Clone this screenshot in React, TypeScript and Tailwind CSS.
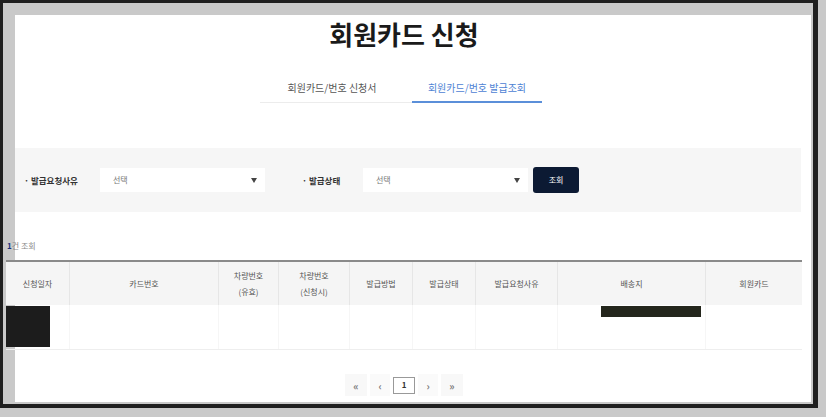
const columns = [
  { label: ['신청일자'], w: 'w-[63px]' },
  { label: ['카드번호'], w: 'w-[149px]' },
  { label: ['차량번호', '(유효)'], w: 'w-[60px]' },
  { label: ['차량번호', '(신청시)'], w: 'w-[71px]' },
  { label: ['발급방법'], w: 'w-[63px]' },
  { label: ['발급상태'], w: 'w-[63px]' },
  { label: ['발급요청사유'], w: 'w-[82px]' },
  { label: ['배송지'], w: 'w-[148px]' },
  { label: ['회원카드'], w: 'w-[97px]' },
];

function Select() {
  return (
    <div className="w-[165px] h-[24px] bg-white flex items-center justify-between pl-[13px] pr-[8px] text-[8px] text-[#777]">
      <span>선택</span>
      <svg width="6" height="5" viewBox="0 0 6 5">
        <path d="M0 0H6L3 5Z" fill="#444" />
      </svg>
    </div>
  );
}

export default function App() {
  return (
    <div className="w-[826px] h-[417px] bg-[#c9c9c9] overflow-hidden font-['Noto_Sans_CJK_KR','Noto_Sans',sans-serif]">
      <div className="w-[818px] h-[408px] border-l-[3px] border-t-[3px] border-r-[5px] border-b-[4px] border-[#1f1f1f] pl-[12px] pt-[12px] pr-[2px] pb-[2px]">
        <div className="w-full h-full bg-white">
          <div className="-ml-[9px] w-[796px] flex flex-col">
            {/* title */}
            <h1 className="text-center text-[26px] leading-[30px] font-bold text-[#1a1a1a] pt-[4px]">회원카드 신청</h1>

            {/* tabs */}
            <div className="flex justify-center mt-[24px] pr-[6px]">
              <div className="w-[152px] h-[30px] flex items-center justify-center pr-[8px] text-[10px] text-[#555] border-b border-[#ececec]">
                회원카드/번호 신청서
              </div>
              <div className="w-[130px] h-[30px] flex items-center justify-center text-[10px] text-[#4d82d4] border-b-2 border-[#5b8fd9]">
                회원카드/번호 발급조회
              </div>
            </div>

            {/* filters */}
            <div className="ml-[9px] mr-[1px] mt-[45px] h-[64px] bg-[#f6f6f6] flex items-center pl-[9px]">
              <span className="w-[76px] text-[8.5px] font-bold text-[#333]">· 발급요청사유</span>
              <Select />
              <span className="ml-[37px] w-[61px] text-[8.5px] font-bold text-[#333]">· 발급상태</span>
              <Select />
              <button className="ml-[5px] w-[46px] h-[26px] rounded-[3px] bg-[#0c1a33] text-white text-[8px]">조회</button>
            </div>

            {/* count */}
            <div className="mt-[28px] ml-[1px] text-[8px] leading-[12px] text-[#888]">
              <span className="font-bold text-[#1b2f7a]">1</span>건 조회
            </div>

            {/* table */}
            <div className="mt-[8px] border-t-2 border-[#8a8a8a]">
              <div className="flex h-[43px] bg-[#f5f5f5]">
                {columns.map((c, i) => (
                  <div
                    key={i}
                    className={`${c.w} flex flex-col items-center justify-center text-[8px] leading-[16px] text-[#555] ${i > 0 ? 'border-l border-[#e6e6e6]' : ''}`}
                  >
                    {c.label.map((l) => (
                      <span key={l}>{l}</span>
                    ))}
                  </div>
                ))}
              </div>
              <div className="flex h-[45px] border-b border-[#eeeeee]">
                {columns.map((c, i) => (
                  <div key={i} className={`${c.w} relative ${i > 0 ? 'border-l border-[#f6f6f6]' : ''}`}>
                    {i === 0 && <div className="absolute left-0 top-[1px] w-[44px] h-[41px] bg-[#1c1c1c]" />}
                    {i === 7 && <div className="absolute left-[43px] top-[1px] w-[100px] h-[11px] bg-[#24261c]" />}
                  </div>
                ))}
              </div>
            </div>

            {/* pagination */}
            <div className="mt-[24px] flex justify-center items-center gap-[3px] text-[10px] font-bold text-[#777]">
              <div className="w-[22px] h-[22px] bg-[#f8f8f8] flex items-center justify-center">«</div>
              <div className="w-[20px] h-[22px] bg-[#fafafa] flex items-center justify-center">‹</div>
              <div className="w-[22px] h-[17px] bg-white border border-[#999] flex items-center justify-center text-[8px] text-[#333]">1</div>
              <div className="w-[20px] h-[22px] bg-[#fafafa] flex items-center justify-center">›</div>
              <div className="w-[22px] h-[22px] bg-[#f8f8f8] flex items-center justify-center">»</div>
            </div>
          </div>
        </div>
      </div>
    </div>
  );
}
